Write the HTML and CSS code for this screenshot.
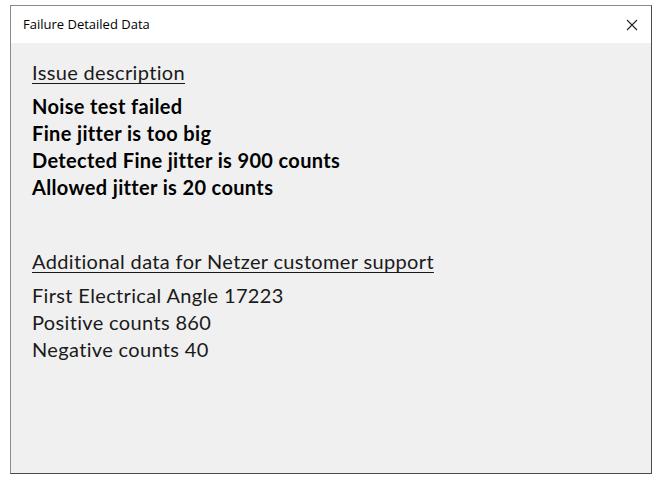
FILE: index.html
```html
<!DOCTYPE html>
<html>
<head>
<meta charset="utf-8">
<link rel="stylesheet" href="styles.css">
</head>
<body>
<div class="window">
  <div class="titlebar">
    <span class="title">Failure Detailed Data</span>
    <svg class="close" width="12" height="12" viewBox="0 0 12 12"><path d="M1 1L11 11M11 1L1 11" stroke="#222" stroke-width="1.1" fill="none"/></svg>
  </div>
  <div class="content">
    <div class="heading">Issue description</div>
    <div class="bold">Noise test failed</div>
    <div class="bold">Fine jitter is too big</div>
    <div class="bold">Detected Fine jitter is 900 counts</div>
    <div class="bold">Allowed jitter is 20 counts</div>
    <div class="heading second">Additional data for Netzer customer support</div>
    <div class="line">First Electrical Angle 17223</div>
    <div class="line">Positive counts 860</div>
    <div class="line">Negative counts 40</div>
  </div>
</div>
</body>
</html>
```
FILE: styles.css
```css
html, body {
  margin: 0;
  padding: 0;
  background: #ffffff;
}
body {
  padding: 5px 0 0 10px;
}
.window {
  width: 640px;
  height: 467px;
  border: 1px solid #8a8a8a;
  border-right-color: #4a4a4a;
  border-bottom-color: #4a4a4a;
  display: flex;
  flex-direction: column;
  background: #f0f0f0;
}
.titlebar {
  height: 37px;
  background: #ffffff;
  display: flex;
  align-items: center;
  justify-content: space-between;
  padding: 0 13px 0 12px;
}
.title {
  font-family: "Open Sans", "Noto Sans", sans-serif;
  font-size: 13px;
  color: #000;
  margin-top: -1px;
}
.close {
  display: block;
}
.content {
  padding: 16px 0 0 21px;
  font-family: Lato, "Noto Sans", sans-serif;
  font-size: 20px;
  letter-spacing: 0.35px;
  color: #000;
  line-height: 27px;
}
.heading {
  text-decoration: underline;
  text-underline-offset: 3px;
  text-decoration-thickness: 1px;
  color: #1a1a1a;
  margin-bottom: 7px;
}
.heading.second {
  margin-top: 47px;
  margin-bottom: 7px;
}
.bold {
  font-weight: bold;
}
.line {
  color: #1a1a1a;
}
```
